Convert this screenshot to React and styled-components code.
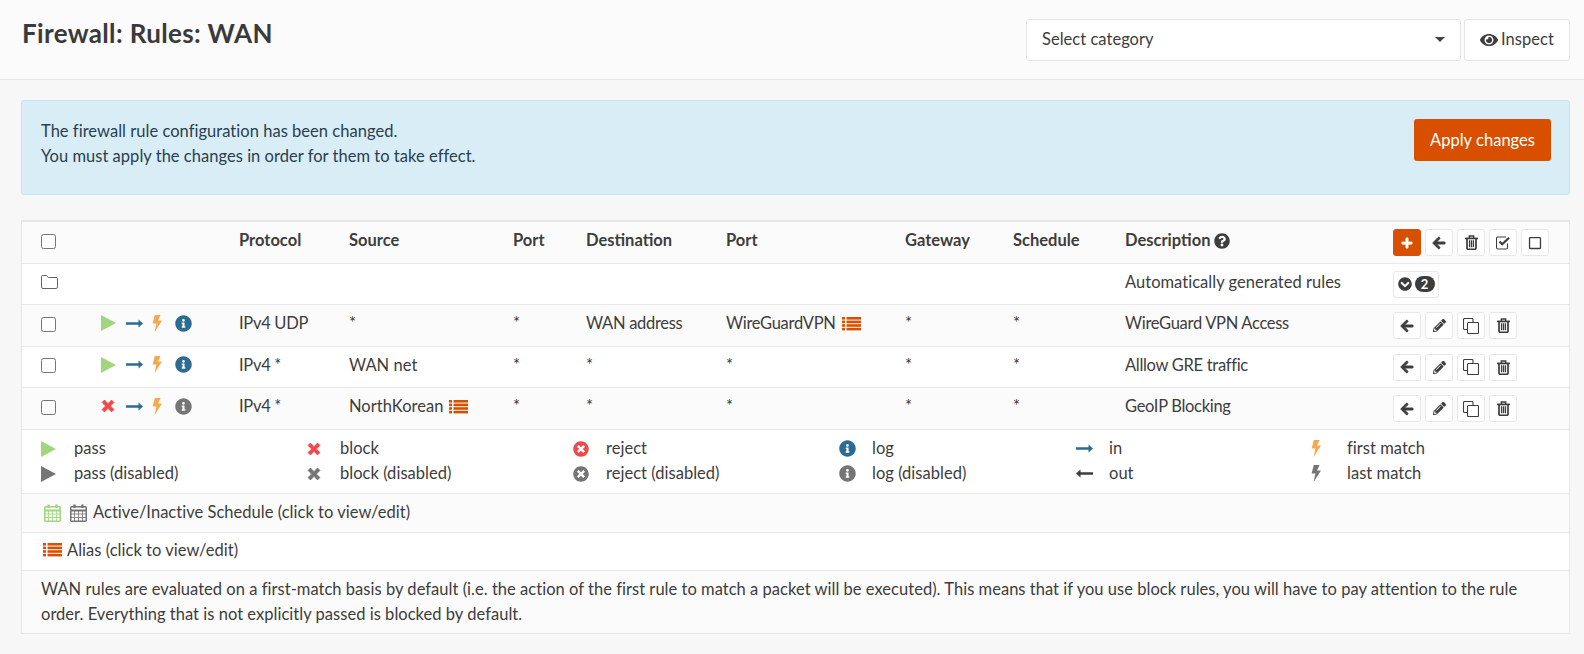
import React from 'react';
import styled, { createGlobalStyle } from 'styled-components';
import {
  FaArrowLeft, FaChevronCircleDown, FaEye, FaInfoCircle, FaPencilAlt, FaPlus,
  FaQuestionCircle, FaRegSquare, FaTimesCircle,
} from 'react-icons/fa';

const GlobalStyle = createGlobalStyle`
  html, body { margin: 0; padding: 0; }
  body {
    background: #f7f7f7;
    color: #3d3d3d;
    font-family: Lato, "Noto Sans", sans-serif;
    font-size: 16.5px;
    letter-spacing: 0.03px;
    line-height: 25px;
  }
`;

const GREEN = '#a0d67e';
const RED = '#f2474b';
const GREY = '#757575';
const BLUE = '#2c6c93';
const ORANGE = '#d94f00';
const AMBER = '#f4a94e';
const DARK = '#3d3d3d';

const Header = styled.header`
  height: 80px;
  box-sizing: border-box;
  background: #fbfbfb;
  border-bottom: 1px solid #e7e7e7;
  padding: 19px 14px 0 22px;
  display: flex;
  justify-content: space-between;
  align-items: flex-start;
`;

const Title = styled.h1`
  margin: 0;
  font-size: 26px;
  line-height: 28px;
  font-weight: 700;
  letter-spacing: 0.35px;
  color: #3a3a3a;
`;

const HeaderTools = styled.div`
  display: flex;
  gap: 3px;
`;

const CategorySelect = styled.div`
  width: 435px;
  height: 42px;
  box-sizing: border-box;
  background: #fff;
  border: 1px solid #e5e5e5;
  border-radius: 3px;
  padding: 0 15px 1px;
  display: flex;
  align-items: center;
  justify-content: space-between;
`;

const Caret = styled.span`
  width: 0;
  height: 0;
  border-left: 5px solid transparent;
  border-right: 5px solid transparent;
  border-top: 5px solid #444;
`;

const InspectButton = styled.div`
  width: 106px;
  height: 42px;
  box-sizing: border-box;
  background: #fff;
  border: 1px solid #e5e5e5;
  border-radius: 3px;
  padding-bottom: 1px;
  display: flex;
  align-items: center;
  justify-content: center;
  gap: 3px;
`;

const Main = styled.main`
  padding: 20px 14px 0 21px;
`;

const Alert = styled.div`
  height: 95px;
  box-sizing: border-box;
  background: #d9edf7;
  border: 1px solid #bce8f1;
  border-radius: 3px;
  padding: 18px 18px 0 19px;
  display: flex;
  justify-content: space-between;
  align-items: flex-start;
  color: #2a3f4f;
`;

const ApplyButton = styled.div`
  width: 137px;
  height: 42px;
  background: ${ORANGE};
  color: #fff;
  border-radius: 3px;
  display: flex;
  align-items: center;
  justify-content: center;
`;

const Table = styled.section`
  margin-top: 25px;
  background: #fff;
  border: 1px solid #e5e5e5;
  border-top-width: 2px;
`;

const Row = styled.div`
  height: ${p => p.$h}px;
  box-sizing: border-box;
  background: ${p => (p.$alt ? '#fbfbfb' : '#fff')};
  border-bottom: 1px solid #e9e9e9;
  padding-left: 19px;
  display: grid;
  grid-template-columns: 60px 138px 110px 164px 73px 140px 179px 108px 112px 268px 1fr;
  align-items: center;
`;

const HeadCell = styled.div`
  font-weight: 700;
  display: flex;
  align-items: center;
  gap: 4px;
  margin-bottom: 4px;
  letter-spacing: 0;
`;

const Cell = styled.div`
  display: flex;
  align-items: center;
  gap: 6px;
  white-space: nowrap;
  margin-bottom: 4px;
  letter-spacing: ${p => (p.$tight ? '-0.3px' : 'inherit')};
`;

const Check = styled.input.attrs({ type: 'checkbox' })`
  width: 15px;
  height: 15px;
  margin: 0 0 3px;
`;

const FolderCell = styled.div`
  display: flex;
  margin-bottom: 5px;
`;

const RuleIcons = styled.div`
  display: flex;
  align-items: center;
  margin-bottom: 5px;
`;

const Slot = styled.span`
  width: ${p => p.$w}px;
  display: flex;
  align-items: center;
`;

const Actions = styled.div`
  display: flex;
  gap: 4px;
`;

const ActionButton = styled.div`
  width: ${p => p.$w || 28}px;
  height: 27px;
  box-sizing: border-box;
  background: ${p => (p.$primary ? ORANGE : '#fff')};
  color: ${p => (p.$primary ? '#fff' : DARK)};
  border: 1px solid ${p => (p.$primary ? ORANGE : '#e7e7e7')};
  border-radius: 3px;
  display: flex;
  align-items: center;
  justify-content: center;
  gap: 3px;
  font-size: 13px;
`;

const BoldArrow = styled(FaArrowLeft)`
  stroke: currentColor;
  stroke-width: 30px;
`;

const BoldPlus = styled(FaPlus)`
  stroke: currentColor;
  stroke-width: 30px;
`;

const CountBadge = styled.span`
  width: 20px;
  height: 16px;
  border-radius: 8px;
  background: ${DARK};
  color: #fff;
  font-size: 13px;
  font-weight: 700;
  letter-spacing: 0;
  line-height: 16px;
  text-align: center;
`;

const Legend = styled.div`
  height: 64px;
  box-sizing: border-box;
  border-bottom: 1px solid #e9e9e9;
  padding: 6px 0 0 19px;
  display: grid;
  grid-template-columns: 266px 266px 266px 237px 235px 1fr;
`;

const LegendItem = styled.div`
  display: flex;
  align-items: center;
  height: 25px;
`;

const LegendIcon = styled.span`
  width: ${p => p.$w || 33}px;
  display: flex;
  align-items: center;
`;

const InfoRow = styled.div`
  height: ${p => p.$h}px;
  box-sizing: border-box;
  background: ${p => (p.$alt ? '#fbfbfb' : '#fff')};
  border-bottom: 1px solid #e9e9e9;
  padding: 0 0 ${p => p.$pb}px ${p => p.$pad}px;
  display: flex;
  align-items: center;
  gap: ${p => p.$gap}px;
`;

const ScheduleLabel = styled.span`
  margin-left: -3px;
`;

const Note = styled.div`
  height: 62px;
  box-sizing: border-box;
  background: #fbfbfb;
  padding: 6px 19px 0;
  line-height: 24.5px;
`;

const Play = ({ color = GREEN }) => (
  <svg width="15" height="16" viewBox="0 0 15 16"><path d="M0 0L15 8L0 16Z" fill={color} /></svg>
);

const Cross = ({ color = RED, size = 14 }) => (
  <svg width={size} height={size} viewBox="0 0 13 13">
    <path d="M1 3.2L3.2 1L6.5 4.3L9.8 1L12 3.2L8.7 6.5L12 9.8L9.8 12L6.5 8.7L3.2 12L1 9.8L4.3 6.5Z" fill={color} stroke={color} strokeWidth="0.8" strokeLinejoin="round" />
  </svg>
);

const LongArrow = ({ color = BLUE, left }) => (
  <svg width="17" height="9" viewBox="0 0 17 9">
    <path d={left ? 'M17 3.2V5.8H4.5V8.5L0 4.5L4.5 0.5V3.2Z' : 'M0 3.2V5.8H12.5V8.5L17 4.5L12.5 0.5V3.2Z'} fill={color} />
  </svg>
);

const Bolt = ({ color = AMBER }) => (
  <svg width="10" height="17" viewBox="0 0 10 17">
    <path d="M2.8 0H8.6L6 5.4H10L2.6 17L4.4 8.4H0.6Z" fill={color} />
  </svg>
);

const Aliases = () => (
  <svg width="19" height="14" viewBox="0 0 19 14" fill={ORANGE}>
    {[0, 3.6, 7.2, 10.8].map(y => (
      <g key={y}>
        <rect x="0" y={y} width="3" height="2.6" />
        <rect x="4.5" y={y} width="14.5" height="2.6" />
      </g>
    ))}
  </svg>
);

const Calendar = ({ color }) => (
  <svg width="17" height="18" viewBox="0 0 17 18" fill="none" stroke={color}>
    <rect x="0.75" y="2.75" width="15.5" height="14.5" rx="1" strokeWidth="1.5" />
    <path d="M1 6.5H16" strokeWidth="2" />
    <path d="M4.5 7V17M8.5 7V17M12.5 7V17M1 10H16M1 13.5H16" strokeWidth="0.8" />
    <path d="M4.5 0.5V4M12.5 0.5V4" strokeWidth="2.4" />
  </svg>
);

const Folder = () => (
  <svg width="17" height="14" viewBox="0 0 17 14" fill="none" stroke="#666">
    <path d="M1.5 0.5H5.5L7.5 2.5H15A1.5 1.5 0 0 1 16.5 4V12A1.5 1.5 0 0 1 15 13.5H2A1.5 1.5 0 0 1 0.5 12V1.5A1 1 0 0 1 1.5 0.5Z" />
  </svg>
);

const Trash = () => (
  <svg width="13" height="15" viewBox="0 0 12 14" fill="none" stroke={DARK}>
    <path d="M0 3.2H12" strokeWidth="1.6" />
    <path d="M4 3V1H8V3" strokeWidth="1.4" />
    <path d="M1.8 3.5V12.2A1.1 1.1 0 0 0 2.9 13.3H9.1A1.1 1.1 0 0 0 10.2 12.2V3.5" strokeWidth="1.6" />
    <path d="M4.2 5V11.5M6 5V11.5M7.8 5V11.5" strokeWidth="1.2" />
  </svg>
);

const Copies = () => (
  <svg width="16" height="16" viewBox="0 0 16 16" fill="none" stroke={DARK} strokeWidth="1.1">
    <path d="M5 11.5H1.5A1 1 0 0 1 0.5 10.5V1.5A1 1 0 0 1 1.5 0.5H9A1 1 0 0 1 10 1.5V4.5" />
    <rect x="4.5" y="4.5" width="11" height="11" rx="1" fill="#fff" />
  </svg>
);

const CheckedBox = () => (
  <svg width="14" height="14" viewBox="0 0 14 14" fill="none" stroke={DARK}>
    <path d="M11.5 7.5V11.5A1.5 1.5 0 0 1 10 13H2A1.5 1.5 0 0 1 0.5 11.5V2.5A1.5 1.5 0 0 1 2 1H10" strokeWidth="1.1" />
    <path d="M3.5 5.5L6.2 8.2L13 1.8" strokeWidth="2.2" />
  </svg>
);

const rules = [
  { action: 'pass', log: true, proto: 'IPv4 UDP', source: '*', dest: 'WAN address', port: 'WireGuardVPN', portAlias: true, desc: 'WireGuard VPN Access', h: 42, alt: true },
  { action: 'pass', log: true, proto: 'IPv4 *', source: 'WAN net', dest: '*', port: '*', desc: 'Alllow GRE traffic', h: 41 },
  { action: 'block', log: false, proto: 'IPv4 *', source: 'NorthKorean', sourceAlias: true, dest: '*', port: '*', desc: 'GeoIP Blocking', h: 42, alt: true },
];

const legend = [
  [
    { icon: <Play />, label: 'pass' },
    { icon: <Play color={GREY} />, label: 'pass (disabled)' },
  ],
  [
    { icon: <Cross />, label: 'block' },
    { icon: <Cross color={GREY} />, label: 'block (disabled)' },
  ],
  [
    { icon: <FaTimesCircle size={16} color={RED} />, label: 'reject' },
    { icon: <FaTimesCircle size={16} color={GREY} />, label: 'reject (disabled)' },
  ],
  [
    { icon: <FaInfoCircle size={17} color={BLUE} />, label: 'log' },
    { icon: <FaInfoCircle size={17} color={GREY} />, label: 'log (disabled)' },
  ],
  [
    { icon: <LongArrow />, label: 'in' },
    { icon: <LongArrow left color={DARK} />, label: 'out' },
  ],
  [
    { icon: <Bolt />, label: 'first match', w: 36 },
    { icon: <Bolt color={GREY} />, label: 'last match', w: 36 },
  ],
];

const RuleActions = () => (
  <Actions>
    <ActionButton><BoldArrow size={14} /></ActionButton>
    <ActionButton><FaPencilAlt size={13} /></ActionButton>
    <ActionButton><Copies /></ActionButton>
    <ActionButton><Trash /></ActionButton>
  </Actions>
);

const App = () => (
  <>
    <GlobalStyle />
    <Header>
      <Title>Firewall: Rules: WAN</Title>
      <HeaderTools>
        <CategorySelect>
          Select category
          <Caret />
        </CategorySelect>
        <InspectButton><FaEye size={18} />Inspect</InspectButton>
      </HeaderTools>
    </Header>
    <Main>
      <Alert>
        <div>
          The firewall rule configuration has been changed.<br />
          You must apply the changes in order for them to take effect.
        </div>
        <ApplyButton>Apply changes</ApplyButton>
      </Alert>
      <Table>
        <Row $h={42} $alt>
          <Check />
          <div />
          <HeadCell>Protocol</HeadCell>
          <HeadCell>Source</HeadCell>
          <HeadCell>Port</HeadCell>
          <HeadCell>Destination</HeadCell>
          <HeadCell>Port</HeadCell>
          <HeadCell>Gateway</HeadCell>
          <HeadCell>Schedule</HeadCell>
          <HeadCell>Description <FaQuestionCircle size={16} /></HeadCell>
          <Actions>
            <ActionButton $primary><BoldPlus size={12} /></ActionButton>
            <ActionButton><BoldArrow size={14} /></ActionButton>
            <ActionButton><Trash /></ActionButton>
            <ActionButton><CheckedBox /></ActionButton>
            <ActionButton><FaRegSquare size={14} /></ActionButton>
          </Actions>
        </Row>
        <Row $h={41}>
          <FolderCell><Folder /></FolderCell>
          <div /><div /><div /><div /><div /><div /><div /><div />
          <Cell>Automatically generated rules</Cell>
          <Actions>
            <ActionButton $w={46}><FaChevronCircleDown size={14} /><CountBadge>2</CountBadge></ActionButton>
          </Actions>
        </Row>
        {rules.map(rule => (
          <Row key={rule.desc} $h={rule.h} $alt={rule.alt}>
            <Check />
            <RuleIcons>
              <Slot $w={25}>{rule.action === 'pass' ? <Play /> : <Cross />}</Slot>
              <Slot $w={26}><LongArrow /></Slot>
              <Slot $w={23}><Bolt /></Slot>
              <Slot $w={17}><FaInfoCircle size={17} color={rule.log ? BLUE : GREY} /></Slot>
            </RuleIcons>
            <Cell $tight>{rule.proto}</Cell>
            <Cell>{rule.source}{rule.sourceAlias && <Aliases />}</Cell>
            <Cell>*</Cell>
            <Cell $tight>{rule.dest}</Cell>
            <Cell $tight>{rule.port}{rule.portAlias && <Aliases />}</Cell>
            <Cell>*</Cell>
            <Cell>*</Cell>
            <Cell $tight>{rule.desc}</Cell>
            <RuleActions />
          </Row>
        ))}
        <Legend>
          {legend.map(column => (
            <div key={column[0].label}>
              {column.map(item => (
                <LegendItem key={item.label}>
                  <LegendIcon $w={item.w}>{item.icon}</LegendIcon>
                  {item.label}
                </LegendItem>
              ))}
            </div>
          ))}
        </Legend>
        <InfoRow $h={39} $alt $pad={22} $gap={9} $pb={1}>
          <Calendar color={GREEN} />
          <Calendar color={GREY} />
          <ScheduleLabel>Active/Inactive Schedule (click to view/edit)</ScheduleLabel>
        </InfoRow>
        <InfoRow $h={38} $pad={21} $gap={5} $pb={3}>
          <Aliases />
          Alias (click to view/edit)
        </InfoRow>
        <Note>
          WAN rules are evaluated on a first-match basis by default (i.e. the action of the first rule to match a packet will be executed). This means that if you use block rules, you will have to pay attention to the rule<br />
          order. Everything that is not explicitly passed is blocked by default.
        </Note>
      </Table>
    </Main>
  </>
);

export default App;
